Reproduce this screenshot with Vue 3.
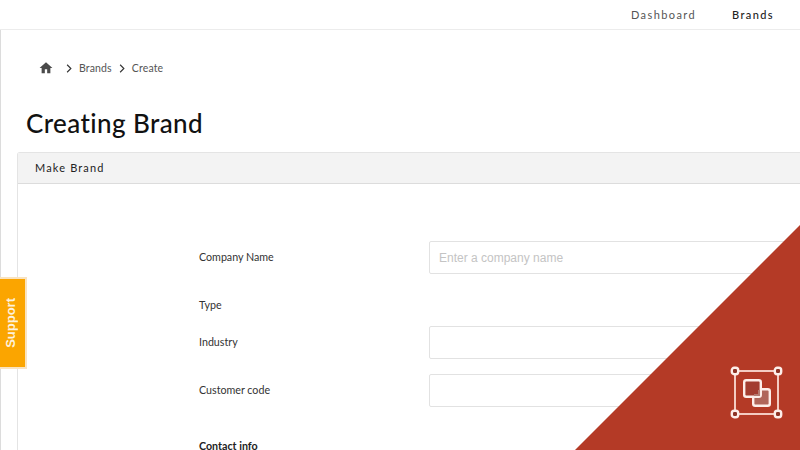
<template>
  <div class="page">
    <header class="topbar">
      <a class="nav-link">Dashboard</a>
      <a class="nav-link active">Brands</a>
    </header>

    <main class="main">
      <nav class="crumbs">
        <svg class="home" viewBox="0 0 24 24" width="14" height="14">
          <path d="M10 21v-7h4v7h5.5v-9H23L12 2 1 12h3.5v9z" fill="#4a4a4a" />
        </svg>
        <svg class="chev first" viewBox="0 0 8 12" width="6" height="9">
          <path d="M1.5 1l5 5-5 5" fill="none" stroke="#333" stroke-width="1.5" />
        </svg>
        <span>Brands</span>
        <svg class="chev" viewBox="0 0 8 12" width="6" height="9">
          <path d="M1.5 1l5 5-5 5" fill="none" stroke="#333" stroke-width="1.5" />
        </svg>
        <span>Create</span>
      </nav>

      <h1 class="title">Creating Brand</h1>

      <section class="panel">
        <div class="panel-head">Make Brand</div>
        <form class="form">
          <div class="row row-company">
            <label>Company Name</label>
            <input type="text" placeholder="Enter a company name" />
          </div>
          <div class="row row-type">
            <label>Type</label>
          </div>
          <div class="row row-industry">
            <label>Industry</label>
            <input type="text" />
          </div>
          <div class="row row-code">
            <label>Customer code</label>
            <input type="text" />
          </div>
          <div class="section-label">Contact info</div>
        </form>
      </section>
    </main>

    <div class="support"><span>Support</span></div>

    <div class="corner"></div>
    <svg class="corner-icon" viewBox="0 0 54 54" width="54" height="54">
      <rect x="5" y="5" width="43" height="43" fill="none" stroke="#fbdcd3" stroke-width="1.8" />
      <rect x="23.2" y="23.2" width="16.6" height="16.6" rx="2" fill="#b0665a" stroke="#fdeee9" stroke-width="2.4" />
      <rect x="14.2" y="14.2" width="16.6" height="16.6" rx="2" fill="#a33d30" stroke="#fdeee9" stroke-width="2.4" />
      <path d="M24 30h6v-6h-2v4h-4z" fill="#b57a70" />
      <g fill="#8f3426" stroke="#fdeee9" stroke-width="2.4">
        <rect x="1.8" y="1.8" width="6.4" height="6.4" rx="2.4" />
        <rect x="44.8" y="1.8" width="6.4" height="6.4" rx="2.4" />
        <rect x="1.8" y="44.8" width="6.4" height="6.4" rx="2.4" />
        <rect x="44.8" y="44.8" width="6.4" height="6.4" rx="2.4" />
      </g>
    </svg>
  </div>
</template>

<script setup>
</script>

<style>
html,
body {
  margin: 0;
  background: #fff;
}
</style>

<style scoped>
.page {
  position: relative;
  width: 800px;
  height: 450px;
  overflow: hidden;
  background: #fff;
  color: #222;
  font-family: "Lato", "Noto Sans", sans-serif;
}

.topbar {
  display: flex;
  justify-content: flex-end;
  align-items: center;
  gap: 36px;
  height: 30px;
  padding-right: 26px;
  box-sizing: border-box;
  border-bottom: 1px solid #ececec;
}

.nav-link {
  font-size: 11px;
  letter-spacing: 1.4px;
  color: #555;
}

.nav-link.active {
  color: #222;
  font-weight: 500;
}

.main {
  border-left: 1px solid #dcdcdc;
  height: 420px;
  padding-top: 30px;
  box-sizing: border-box;
}

.crumbs {
  display: flex;
  align-items: center;
  height: 16px;
  padding-left: 38px;
  font-size: 10.5px;
  color: #555;
}

.crumbs span {
  letter-spacing: 0.15px;
}

.home {
  margin-right: 13px;
}

.chev {
  margin: 0 7px 0 7px;
}

.chev.first {
  margin-left: 0;
}

.title {
  margin: 30px 0 0 25px;
  font-size: 26px;
  line-height: 34px;
  font-weight: 500;
  letter-spacing: 0.4px;
  color: #111;
}

.panel {
  margin: 12px -20px 0 16px;
  border: 1px solid #e4e4e4;
  border-radius: 3px 0 0 0;
  border-bottom: none;
}

.panel-head {
  height: 30px;
  line-height: 30px;
  padding-left: 17px;
  background: #f3f3f3;
  border-bottom: 1px solid #dcdcdc;
  font-size: 11px;
  letter-spacing: 1.15px;
  color: #222;
}

.form {
  padding: 57px 0 0 181px;
}

.row {
  display: grid;
  grid-template-columns: 230px 1fr;
  align-items: center;
}

.row label {
  padding-bottom: 2px;
  font-size: 10.7px;
  color: #333;
}

.row input {
  height: 33px;
  box-sizing: border-box;
  width: 100%;
  padding: 0 9px;
  border: 1px solid #e2e2e2;
  border-radius: 2px;
  background: #fff;
  font-family: "Liberation Sans", Arial, sans-serif;
  font-size: 12px;
  outline: none;
}

.row input::placeholder {
  color: #c4c4c4;
}

.row-company {
  margin-bottom: 21px;
}

.row-type {
  height: 20px;
  margin-bottom: 11px;
}

.row-industry {
  margin-bottom: 15px;
}

.section-label {
  margin-top: 29px;
  height: 20px;
  line-height: 20px;
  font-size: 10.7px;
  font-weight: 700;
  color: #222;
}

.support {
  position: absolute;
  left: 0;
  top: 277px;
  width: 27px;
  height: 92px;
  padding-right: 4px;
  box-sizing: border-box;
  display: flex;
  align-items: center;
  justify-content: center;
  background: #fba500;
  border: 2px solid #f9e3c0;
  border-left: none;
}

.support span {
  writing-mode: vertical-rl;
  transform: rotate(180deg);
  color: #fdf1dc;
  font-family: "Liberation Sans", Arial, sans-serif;
  font-size: 13px;
  font-weight: 700;
}

.corner {
  position: absolute;
  right: 0;
  bottom: 0;
  width: 225px;
  height: 225px;
  background: #b43a26;
  clip-path: polygon(100% 0, 100% 100%, 0 100%);
}

.corner-icon {
  position: absolute;
  left: 730px;
  top: 366px;
}
</style>
